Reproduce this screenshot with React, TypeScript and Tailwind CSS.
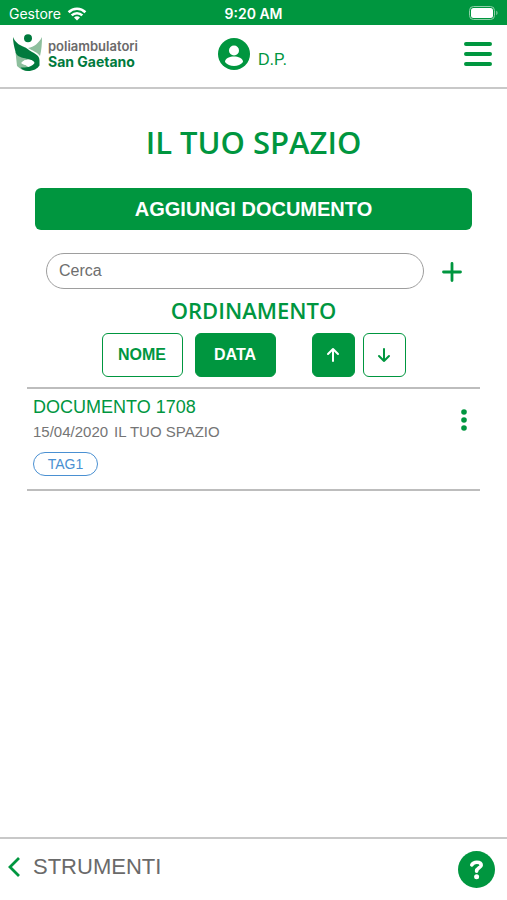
import React, { useState } from "react"

interface Documento {
  id: number
  nome: string
  data: string
  spazio: string
  tags: string[]
}

const documenti: Documento[] = [
  {
    id: 1,
    nome: "DOCUMENTO 1708",
    data: "15/04/2020",
    spazio: "IL TUO SPAZIO",
    tags: ["TAG1"],
  },
]

const StatusBar = () => (
  <div className="grid h-[25px] grid-cols-3 items-center bg-[#00963f] px-2 font-[Inter,sans-serif] text-sm text-white">
    <div className="flex items-center gap-1.5 pt-0.5 pl-px">
      <span>Gestore</span>
      <svg width="20" height="14" viewBox="0 0 20 14" fill="none" stroke="currentColor" strokeWidth="2.6">
        <path d="M1.6 5.2a12 12 0 0 1 16.8 0" />
        <path d="M4.7 8.4a7.6 7.6 0 0 1 10.6 0" />
        <path d="M10 13.6 7 10.6a4.2 4.2 0 0 1 6 0z" fill="currentColor" stroke="none" />
      </svg>
    </div>
    <span className="pt-0.5 text-center font-semibold">9:20 AM</span>
    <svg className="justify-self-end" width="30" height="14" viewBox="0 0 30 14">
      <rect x="0.5" y="0.5" width="25" height="13" rx="4" fill="none" stroke="#8fd0a8" />
      <rect x="2" y="2" width="22" height="10" rx="2.5" fill="#fff" />
      <path d="M27.3 4.8c1.6.6 1.6 3.8 0 4.4z" fill="#8fd0a8" />
    </svg>
  </div>
)

const Logo = () => (
  <a href="#" className="flex items-center gap-1.5 pb-1">
    <svg width="29" height="37" viewBox="0 0 29 37">
      <path d="M29 3c0 7-.5 13-2 19-3-4-7-5-12-8 6-1 11-5 14-11z" fill="#8dbf9d" />
      <path d="M2.500 18l1.500 14c3 3 7 5 11 5l3-2-9-6.500c1-2 4-3 8-3z" fill="#8dbf9d" />
      <path
        d="M0 3c2 5 6 8 10 9.500 5 2 5 3 7.500 4.500 4 2.500 9 4 9 9.500v5c-2 3-6 5.500-11.500 5.500-3 0-6-1.500-7.500-3.500 6 .5 12-1 14-4.500-2-4-7-4-11-5C5 22.500 3 21 2.300 17 1 12 0 8 0 3z"
        fill="#007a3d"
      />
      <path d="M8 29c3-4 10-4.500 13.500-.8-3 3.800-9.500 4-13.500.8z" fill="#fff" />
      <circle cx="15" cy="4.300" r="4" fill="#007a3d" />
    </svg>
    <span className="flex flex-col pt-1 font-[Inter,sans-serif] text-sm font-bold">
      <span className="text-[13px] leading-[15px] font-semibold text-[#6a6a6a]">poliambulatori</span>
      <span className="leading-[15px] text-[#007a3d]">San Gaetano</span>
    </span>
  </a>
)

const Header = () => (
  <header className="grid h-16 grid-cols-3 items-center border-b-2 border-[#c8c8c8] pr-[15px] pb-1 pl-[13px]">
    <Logo />
    <button type="button" className="flex items-center justify-center gap-2 text-[#00963f]">
      <svg width="32" height="32" viewBox="0 0 32 32">
        <circle cx="16" cy="16" r="16" fill="currentColor" />
        <circle cx="16" cy="12.500" r="5" fill="#fff" />
        <path d="M7 24c0-4 5-5.500 9-5.500s9 1.500 9 5.500c-2 2.500-5.500 4-9 4s-7-1.500-9-4z" fill="#fff" />
      </svg>
      <span className="pt-3 text-base">D.P.</span>
    </button>
    <button type="button" aria-label="Menu" className="justify-self-end text-[#00963f]">
      <svg width="28" height="26" viewBox="0 0 28 26" stroke="currentColor" strokeWidth="4" strokeLinecap="round">
        <path d="M2 3h24M2 13h24M2 23h24" />
      </svg>
    </button>
  </header>
)

const SortButton = (props: {
  active: boolean
  label: string
  className: string
  onClick: () => void
  children: React.ReactNode
}) => {
  const { active, label, className, onClick, children } = props
  return (
    <button
      type="button"
      aria-label={label}
      aria-pressed={active}
      onClick={onClick}
      className={`flex h-11 items-center justify-center rounded-md border border-[#00963f] text-base font-bold ${
        active ? "bg-[#00963f] text-white" : "bg-white text-[#00963f]"
      } ${className}`}
    >
      {children}
    </button>
  )
}

const DocumentRow = ({ documento }: { documento: Documento }) => (
  <li className="flex items-start justify-between border-b-2 border-[#bdbdbd] pt-1.5 pr-2 pb-3 pl-1.5">
    <div>
      <div className="text-lg leading-6 text-[#00963f]">{documento.nome}</div>
      <div className="flex gap-1.5 text-[15px] leading-[26px] text-[#757575]">
        <span>{documento.data}</span>
        <span>{documento.spazio}</span>
      </div>
      <div className="flex gap-2 pt-[7px] pb-px">
        {documento.tags.map((tag) => (
          <span
            key={tag}
            className="flex h-6 w-[65px] items-center justify-center rounded-full border border-[#4a90d2] text-sm text-[#4a90d2]"
          >
            {tag}
          </span>
        ))}
      </div>
    </div>
    <button type="button" aria-label="Opzioni" className="pt-3.5 text-[#00963f]">
      <svg width="16" height="22" viewBox="0 0 16 22" fill="currentColor">
        <circle cx="8" cy="3" r="2.800" />
        <circle cx="8" cy="11" r="2.800" />
        <circle cx="8" cy="19" r="2.800" />
      </svg>
    </button>
  </li>
)

const Footer = () => (
  <footer className="flex h-[63px] items-center justify-between border-t-2 border-[#c8c8c8] pr-3 pl-2">
    <a href="#" className="flex items-center gap-[13px] pb-1.5 text-[22px] text-[#6a6a6a]">
      <svg width="12" height="20" viewBox="0 0 12 20" fill="none" stroke="#00963f" strokeWidth="2.800">
        <path d="M11 1 2 10l9 9" />
      </svg>
      STRUMENTI
    </a>
    <button type="button" aria-label="Aiuto">
      <svg width="37" height="37" viewBox="0 0 37 37" fill="none">
        <circle cx="18.500" cy="18.500" r="18.500" fill="#00963f" />
        <path
          d="M13.800 13.800c1-1.900 2.800-2.600 5-2.600 2.700 0 4.400 1 4.400 3 0 2.700-4.600 2.700-4.600 6"
          stroke="#fff"
          strokeWidth="3.600"
          strokeLinecap="round"
        />
        <circle cx="18.600" cy="25.800" r="2.500" fill="#fff" />
      </svg>
    </button>
  </footer>
)

const App = () => {
  const [ordine, setOrdine] = useState<"nome" | "data">("data")
  const [crescente, setCrescente] = useState(true)
  const [cerca, setCerca] = useState("")

  const visibili = documenti.filter((d) =>
    d.nome.toLowerCase().includes(cerca.toLowerCase()),
  )

  return (
    <div className="flex min-h-screen flex-col bg-white font-['Liberation_Sans',Arial,sans-serif]">
      <StatusBar />
      <Header />
      <main className="flex-1 px-[27px] pt-8">
        <h1 className="text-center font-['Open_Sans',sans-serif] text-[31px] leading-[42px] font-semibold text-[#00963f]">
          IL TUO SPAZIO
        </h1>
        <div className="px-2 pt-[25px]">
          <button
            type="button"
            className="h-[42px] w-full rounded-md bg-[#00963f] text-xl font-bold text-white"
          >
            AGGIUNGI DOCUMENTO
          </button>
        </div>
        <div className="flex items-center gap-[18px] pt-[23px] pr-[18px] pl-[19px]">
          <input
            type="text"
            aria-label="Cerca"
            placeholder="Cerca"
            className="h-9 min-w-0 flex-1 rounded-full border border-[#9e9e9e] px-3 text-base outline-none placeholder:text-[#6e6e6e]"
            value={cerca}
            onChange={(e) => {
              setCerca(e.target.value)
            }}
          />
          <button type="button" aria-label="Aggiungi filtro" className="pt-0.5 text-[#00963f]">
            <svg width="20" height="20" viewBox="0 0 20 20" stroke="currentColor" strokeWidth="2.800" strokeLinecap="round">
              <path d="M10 1.500v17M1.500 10h17" />
            </svg>
          </button>
        </div>
        <h2 className="pt-[7px] text-center font-['Open_Sans',sans-serif] text-[22px] leading-7 font-semibold text-[#00963f]">
          ORDINAMENTO
        </h2>
        <div className="flex justify-center pt-[9px] pb-[10px]">
          <div className="flex gap-3">
            <SortButton active={ordine === "nome"} label="NOME" className="w-[81px]" onClick={() => setOrdine("nome")}>
              NOME
            </SortButton>
            <SortButton active={ordine === "data"} label="DATA" className="w-[81px]" onClick={() => setOrdine("data")}>
              DATA
            </SortButton>
          </div>
          <div className="flex gap-2 pl-9">
            <SortButton active={crescente} label="Crescente" className="w-[43px]" onClick={() => setCrescente(true)}>
              <svg width="14" height="16" viewBox="0 0 14 16" fill="none" stroke="currentColor" strokeWidth="2" strokeLinecap="round" strokeLinejoin="round">
                <path d="M7 14V2M2 7l5-5 5 5" />
              </svg>
            </SortButton>
            <SortButton active={!crescente} label="Decrescente" className="w-[43px]" onClick={() => setCrescente(false)}>
              <svg width="14" height="16" viewBox="0 0 14 16" fill="none" stroke="currentColor" strokeWidth="2" strokeLinecap="round" strokeLinejoin="round">
                <path d="M7 2v12M2 9l5 5 5-5" />
              </svg>
            </SortButton>
          </div>
        </div>
        <ul className="border-t-2 border-[#bdbdbd]">
          {visibili.map((d) => (
            <DocumentRow key={d.id} documento={d} />
          ))}
        </ul>
      </main>
      <Footer />
    </div>
  )
}

export default App
